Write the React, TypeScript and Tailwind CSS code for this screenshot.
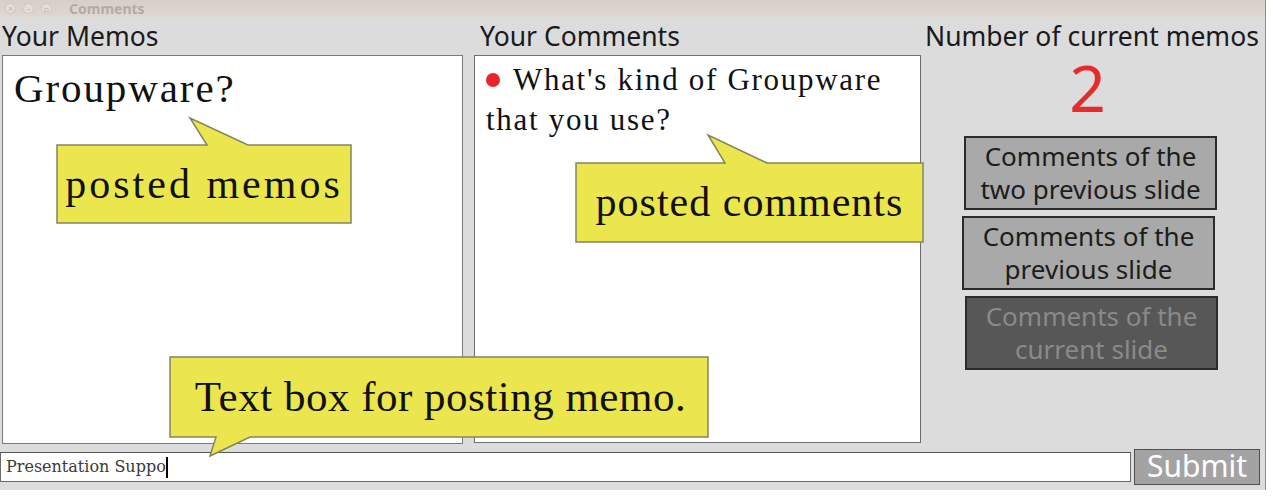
import React from "react";

const ui = { fontFamily: '"Noto Sans", "DejaVu Sans", sans-serif' };
const serif = { fontFamily: '"Liberation Serif", "Times New Roman", serif' };
const inputFont = { fontFamily: '"DejaVu Serif", serif' };

type CalloutProps = {
  className: string;
  w: number;
  h: number;
  path: string;
  textBox: string;
  children: React.ReactNode;
};

function Callout({ className, w, h, path, textBox, children }: CalloutProps) {
  return (
    <div className={`absolute ${className}`}>
      <svg width={w} height={h} viewBox={`0 0 ${w} ${h}`} className="block overflow-visible">
        <path d={path} fill="#ebe64d" stroke="#85845f" strokeWidth={1.5} strokeLinejoin="miter" />
      </svg>
      <div className={`absolute flex items-center justify-center text-[#111] ${textBox}`} style={serif}>
        {children}
      </div>
    </div>
  );
}

function SlideButton({ label1, label2, dark, className = "" }: { label1: string; label2: string; dark?: boolean; className?: string }) {
  return (
    <div
      className={`w-[253px] h-[74px] border-2 border-[#2b2b2b] flex flex-col items-center justify-center text-[26px] leading-[33px] ${
        dark ? "bg-[#575757] text-[#8a8a8a]" : "bg-[#a9a9a9] text-[#1c1c1c]"
      } ${className}`}
    >
      <span>{label1}</span>
      <span>{label2}</span>
    </div>
  );
}

export default function App() {
  return (
    <div className="w-[1273px] h-[496px] bg-white overflow-hidden" style={ui}>
      <div className="w-[1266px] h-[490px] flex flex-col border-r border-[#8e8e8e] bg-[#dcdcdc] relative">
        {/* window title bar */}
        <div className="h-[17px] bg-gradient-to-b from-[#d6cfc8] to-[#ded8d1] flex items-center overflow-hidden">
          <div className="flex items-center gap-[7px] pl-[5px]">
            <span className="w-[11px] h-[11px] rounded-full bg-[#e4ded8] border border-[#cfc8c1] text-[8px] leading-[9px] text-[#b9b2ab] text-center">×</span>
            <span className="w-[11px] h-[11px] rounded-full bg-[#e4ded8] border border-[#cfc8c1] text-[8px] leading-[9px] text-[#b9b2ab] text-center">–</span>
            <span className="w-[11px] h-[11px] rounded-full bg-[#e4ded8] border border-[#cfc8c1] text-[8px] leading-[9px] text-[#b9b2ab] text-center">▫</span>
          </div>
          <span className="ml-[17px] text-[14px] font-bold text-[#b2aba4] leading-[15px]">Comments</span>
        </div>

        {/* panels */}
        <div className="h-[427px] flex">
          <div className="w-[463px] pl-[2px] flex flex-col">
            <div className="h-[38px] pt-[4px] text-[26.5px] leading-[30px] text-[#1a1a1a]">Your Memos</div>
            <div className="h-[389px] bg-white border border-[#7a7a7a] pl-[11px] pt-[13px]">
              <div className="text-[41px] leading-[38px] tracking-[1.9px] text-[#111]" style={serif}>
                Groupware?
              </div>
            </div>
          </div>

          <div className="w-[447px] ml-[11px] flex flex-col">
            <div className="h-[38px] pt-[4px] pl-[6px] text-[26.5px] leading-[30px] text-[#1a1a1a]">Your Comments</div>
            <div className="h-[388px] bg-white border border-[#6e6e6e] pl-[11px] pt-[4px]">
              <div className="text-[31px] leading-[40px] tracking-[1.7px] text-[#111]" style={serif}>
                <span className="inline-block w-[14px] h-[14px] rounded-full bg-[#e8232b] mr-[13px] mb-[3px]" />
                What's kind of Groupware
                <br />
                that you use?
              </div>
            </div>
          </div>

          <div className="w-[340px] ml-[4px] flex flex-col">
            <div className="h-[30px] mt-[4px] text-[26.5px] leading-[30px] text-[#1a1a1a] whitespace-nowrap">Number of current memos</div>
            <div className="ml-[39px] w-[253px] flex flex-col">
              <div className="mt-[8px] text-center text-[64px] leading-[58px] text-[#e62b2b] -ml-[6px]">2</div>
              <div className="mt-[19px] flex flex-col gap-[6px]">
                <SlideButton label1="Comments of the" label2="two previous slide" />
                <SlideButton label1="Comments of the" label2="previous slide" className="-ml-[2px]" />
                <SlideButton label1="Comments of the" label2="current slide" dark className="ml-[1px]" />
              </div>
            </div>
          </div>
        </div>

        {/* memo input row */}
        <div className="h-[46px] flex items-center">
          <div className="w-[1131px] h-[30px] bg-white border border-[#6a6a6a] border-t-[#555] flex items-center pl-[5px]">
            <span className="text-[16px] text-[#3a3a3a] leading-none" style={inputFont}>
              Presentation Suppo
            </span>
            <span className="w-[2px] h-[21px] bg-black" />
          </div>
          <div className="ml-[3px] w-[126px] h-[36px] bg-[#a3a3a3] border-[1.5px] border-[#4f4f4f] flex items-center justify-center text-white text-[30px] leading-none pb-[2px]">
            Submit
          </div>
        </div>

        {/* annotation callouts */}
        <Callout
          className="left-[57px] top-[118px]"
          w={294}
          h={105}
          path="M0,27 L150,27 L133,0 L191,27 L294,27 L294,105 L0,105 Z"
          textBox="left-0 top-[27px] w-[294px] h-[78px] text-[42px] tracking-[3px]"
        >
          posted memos
        </Callout>
        <Callout
          className="left-[576px] top-[135px]"
          w={347}
          h={107}
          path="M0,28 L149,28 L132,0 L191,28 L347,28 L347,107 L0,107 Z"
          textBox="left-0 top-[28px] w-[347px] h-[79px] text-[42px] tracking-[1px]"
        >
          posted comments
        </Callout>
        <Callout
          className="left-[170px] top-[357px]"
          w={538}
          h={99}
          path="M0,0 L538,0 L538,80 L80,80 L40,99 L46,80 L0,80 Z"
          textBox="left-0 top-0 w-[538px] h-[80px] text-[43px] tracking-[0.5px] pl-[3px]"
        >
          Text box for posting memo.
        </Callout>
      </div>
    </div>
  );
}
